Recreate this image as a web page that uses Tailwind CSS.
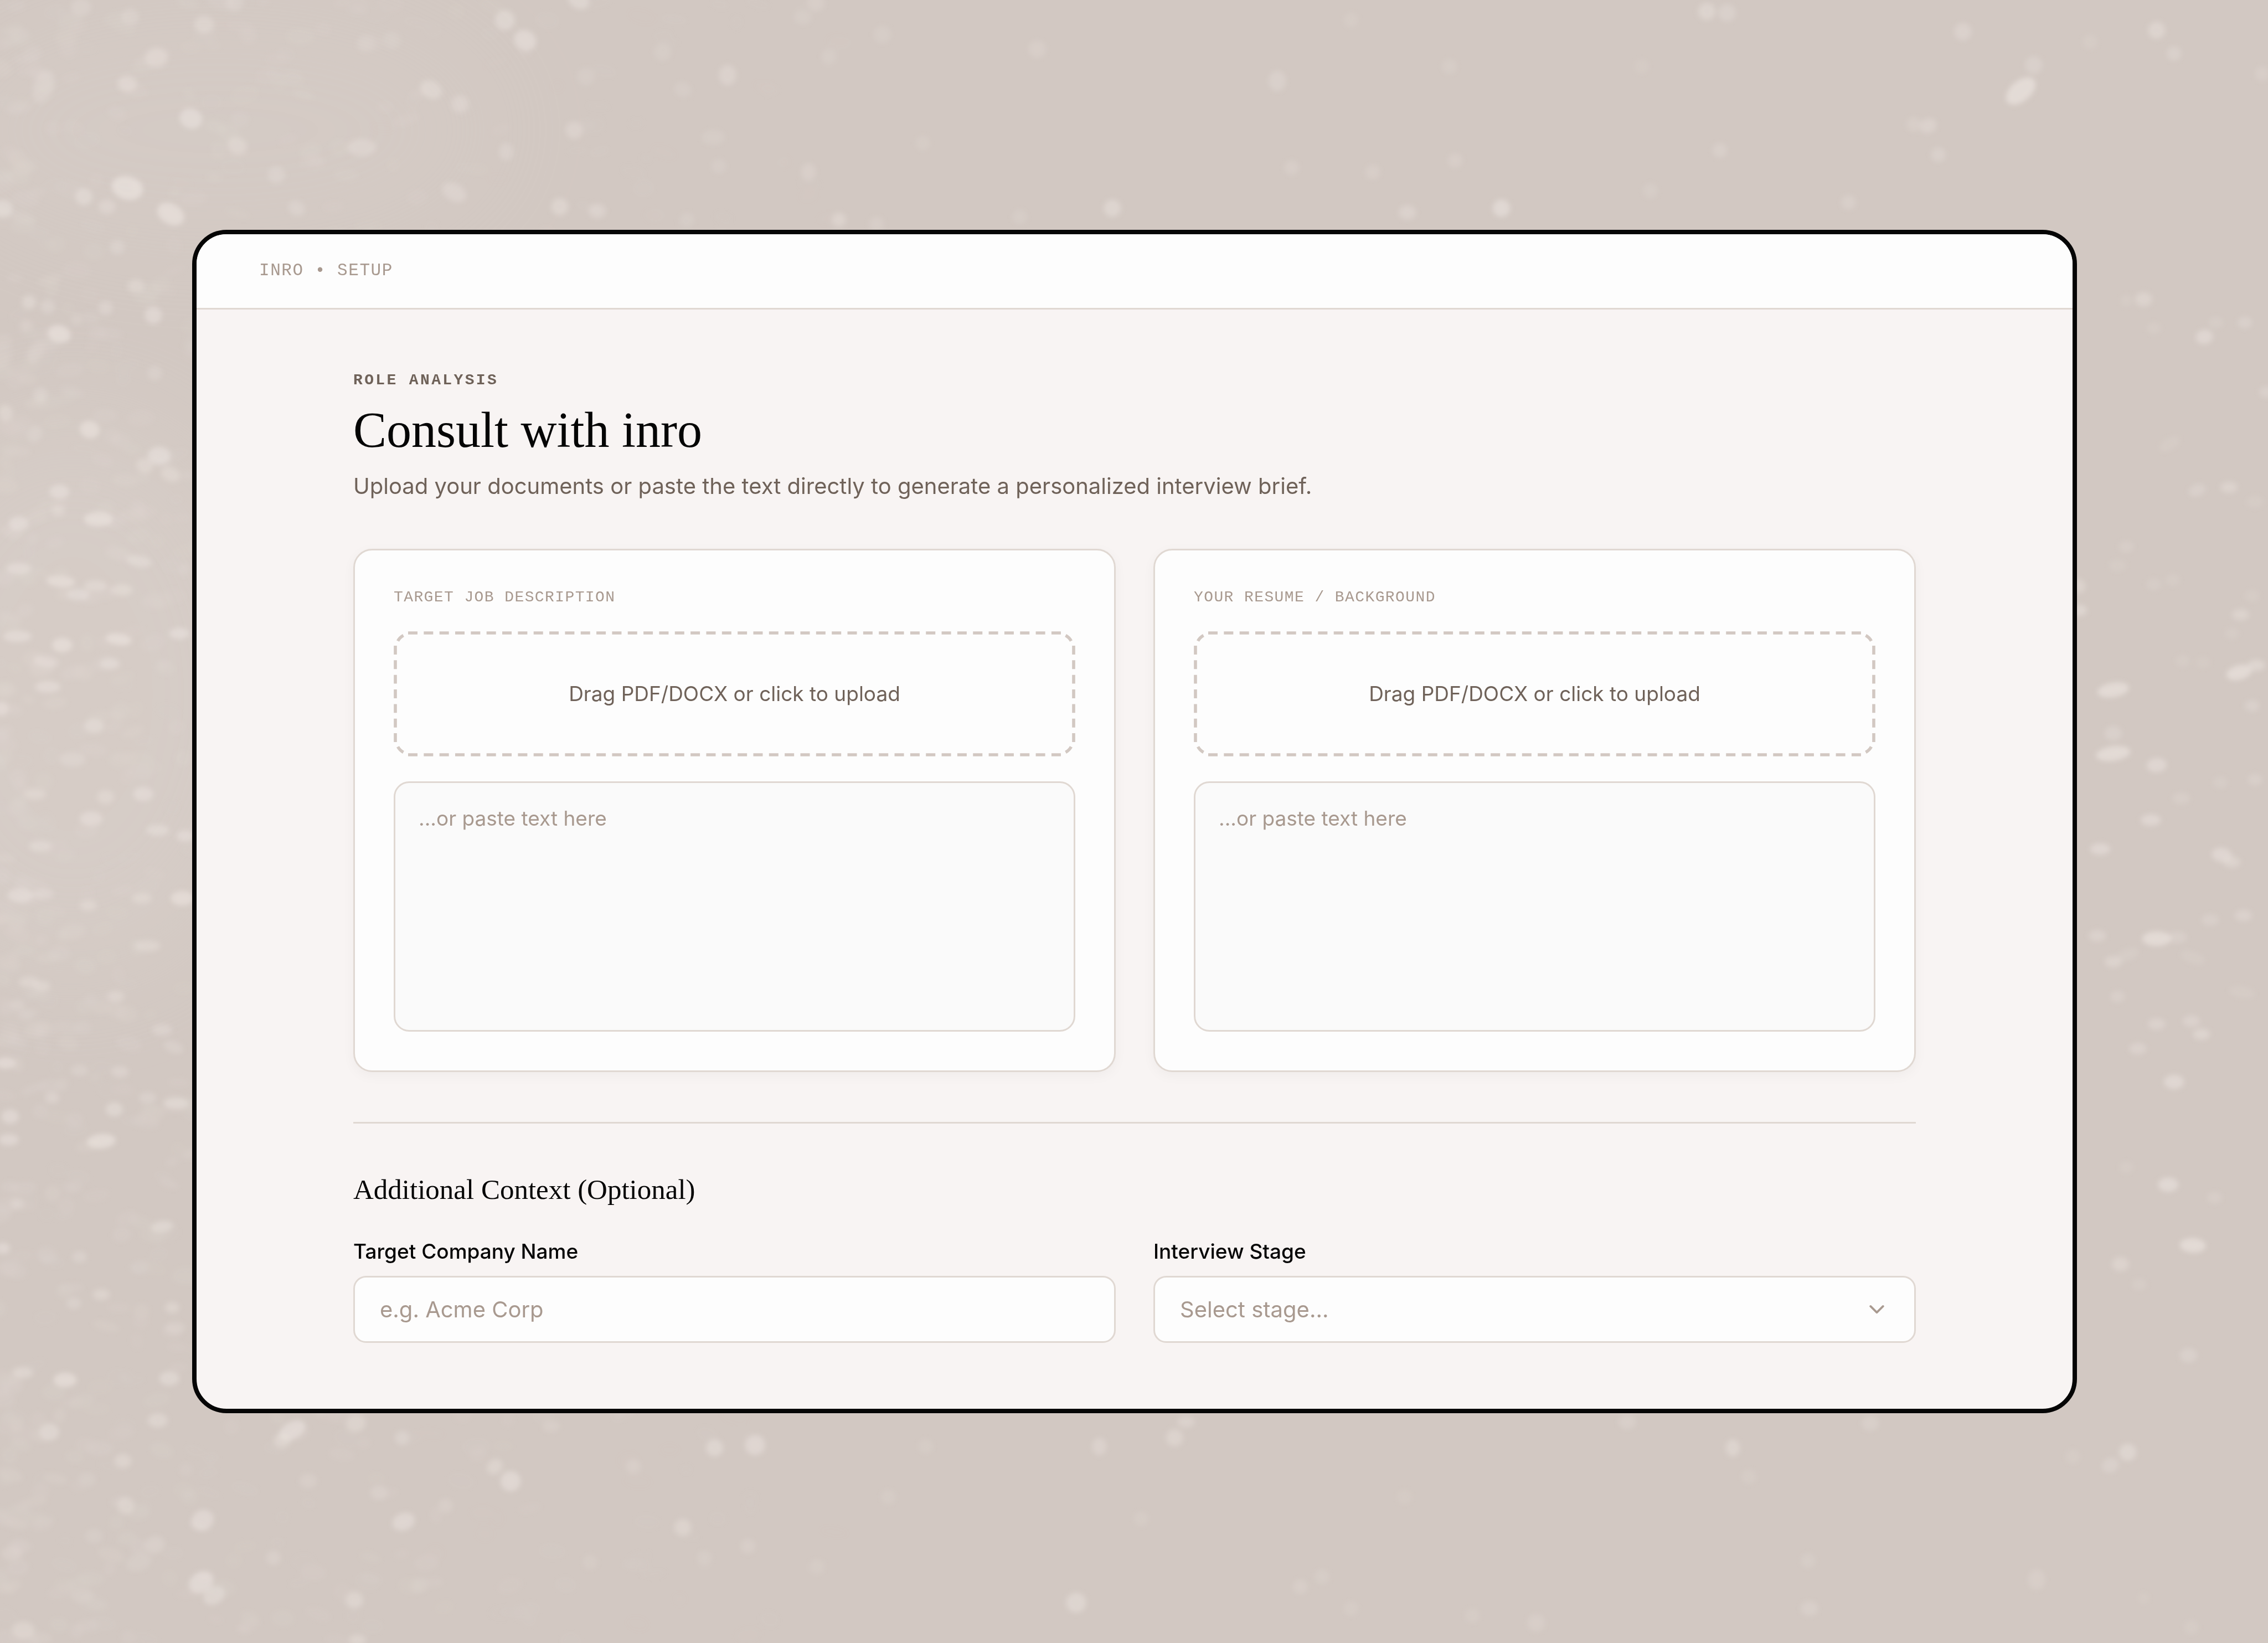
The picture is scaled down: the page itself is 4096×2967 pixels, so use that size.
<!DOCTYPE html>
<html lang="en">
<head>
    <meta charset="UTF-8">
    <meta name="viewport" content="width=device-width, initial-scale=1.0">
    <title>Inro - Setup</title>
    <script src="https://cdn.jsdelivr.net/npm/@tailwindcss/browser@4"></script>
</head>
<body class="bg-[#d2c8c2] font-['Inter','Liberation_Sans',sans-serif] text-[#050505]">
    <div class="relative min-h-screen flex items-center overflow-hidden pl-[347px] pr-[345px] py-[100px]">
        <!-- Dust texture behind the window -->
        <svg class="absolute inset-0 w-full h-full" viewBox="0 0 1568 1136" preserveAspectRatio="xMidYMid slice" aria-hidden="true">
            <defs>
                <filter id="soft" x="-5%" y="-5%" width="110%" height="110%"><feGaussianBlur stdDeviation="1.8" /></filter>
                <filter id="haze" x="-30%" y="-30%" width="160%" height="160%"><feGaussianBlur stdDeviation="40" /></filter>
            </defs>
            <ellipse cx="50" cy="480" rx="150" ry="200" fill="#e2dad5" opacity="0.25" filter="url(#haze)" />
            <ellipse cx="150" cy="90" rx="200" ry="90" fill="#e2dad5" opacity="0.15" filter="url(#haze)" />
            <g id="dust" fill="#ece5e0" filter="url(#soft)"></g>
        </svg>

        <main class="relative w-full border-8 border-[#050505] rounded-[62px] bg-[#f8f4f3] overflow-hidden">
            <header class="h-[136px] flex items-center px-[113px] bg-[#fdfdfd] border-b-3 border-[#e0d8d2]">
                <span class="font-['Liberation_Mono',monospace] text-[31px] tracking-wider text-[#a8998f]">INRO • SETUP</span>
            </header>

            <div class="px-[283px] pt-[113px] pb-[119px]">
                <p class="font-['Liberation_Mono',monospace] text-[28px] leading-[30px] font-bold tracking-[0.12em] text-[#6f6259]">ROLE ANALYSIS</p>
                <h1 class="mt-[21px] font-['Liberation_Serif',serif] text-[90px] leading-[108px]">Consult with inro</h1>
                <p class="mt-[17px] text-[40px] leading-[60px] text-[#6f6259]">Upload your documents or paste the text directly to generate a personalized interview brief.</p>

                <form id="setupForm">
                    <div class="mt-[83px] grid grid-cols-2 gap-[68px]">
                        <section class="border-3 border-[#e0d8d2] rounded-[34px] bg-[#fdfdfd] p-[70px] shadow-[0_6px_23px_rgba(0,0,0,0.04)]">
                            <label for="jobText" class="block font-['Liberation_Mono',monospace] text-[28px] leading-[30px] tracking-wider text-[#a8998f]">TARGET JOB DESCRIPTION</label>
                            <button type="button" class="relative mt-[46px] block w-full h-[226px] text-[37px] text-[#6f6259]">
                                <svg class="absolute inset-0 w-full h-full" viewBox="0 0 1231 226" preserveAspectRatio="none" fill="none" stroke="#d2c8c2" stroke-width="5.6" aria-hidden="true">
                                    <path d="M26 3H1205M26 223H1205" stroke-dasharray="17 11.34" />
                                    <path d="M3 26V200M1228 26V200" stroke-dasharray="15.9 10.45" />
                                    <path d="M7.5 17.5Q11 11 17.5 7.5M1213.5 7.5Q1220 11 1223.5 17.5M1223.5 208.5Q1220 215 1213.5 218.5M17.5 218.5Q11 215 7.5 208.5" />
                                </svg>
                                Drag PDF/DOCX or click to upload
                            </button>
                            <textarea id="jobText" placeholder="...or paste text here" class="mt-[45px] block w-full h-[452px] resize-none border-3 border-[#e0d8d2] rounded-[28px] bg-[#fafafa] px-[42px] py-[36px] text-[37px] leading-[56px] placeholder:text-[#a8998f] focus:outline-none focus:border-[#a8998f]"></textarea>
                        </section>

                        <section class="border-3 border-[#e0d8d2] rounded-[34px] bg-[#fdfdfd] p-[70px] shadow-[0_6px_23px_rgba(0,0,0,0.04)]">
                            <label for="resumeText" class="block font-['Liberation_Mono',monospace] text-[28px] leading-[30px] tracking-wider text-[#a8998f]">YOUR RESUME / BACKGROUND</label>
                            <button type="button" class="relative mt-[46px] block w-full h-[226px] text-[37px] text-[#6f6259]">
                                <svg class="absolute inset-0 w-full h-full" viewBox="0 0 1231 226" preserveAspectRatio="none" fill="none" stroke="#d2c8c2" stroke-width="5.6" aria-hidden="true">
                                    <path d="M26 3H1205M26 223H1205" stroke-dasharray="17 11.34" />
                                    <path d="M3 26V200M1228 26V200" stroke-dasharray="15.9 10.45" />
                                    <path d="M7.5 17.5Q11 11 17.5 7.5M1213.5 7.5Q1220 11 1223.5 17.5M1223.5 208.5Q1220 215 1213.5 218.5M17.5 218.5Q11 215 7.5 208.5" />
                                </svg>
                                Drag PDF/DOCX or click to upload
                            </button>
                            <textarea id="resumeText" placeholder="...or paste text here" class="mt-[45px] block w-full h-[452px] resize-none border-3 border-[#e0d8d2] rounded-[28px] bg-[#fafafa] px-[42px] py-[36px] text-[37px] leading-[56px] placeholder:text-[#a8998f] focus:outline-none focus:border-[#a8998f]"></textarea>
                        </section>
                    </div>

                    <hr class="mt-[90px] border-t-3 border-[#e0d8d2]">

                    <h2 class="mt-[89px] font-['Liberation_Serif',serif] text-[51px] leading-[61px]">Additional Context (Optional)</h2>
                    <div class="mt-[53px] grid grid-cols-2 gap-[68px]">
                        <div>
                            <label for="company" class="block text-[37px] leading-[56px] font-medium">Target Company Name</label>
                            <input type="text" id="company" name="company" placeholder="e.g. Acme Corp"
                                class="mt-[16px] block w-full h-[121px] border-3 border-[#e0d8d2] rounded-[23px] bg-[#fdfdfd] px-[45px] text-[40px] placeholder:text-[#a8998f] focus:outline-none focus:border-[#a8998f]">
                        </div>
                        <div>
                            <label for="stage" class="block text-[37px] leading-[56px] font-medium">Interview Stage</label>
                            <div class="relative mt-[16px]">
                                <select id="stage" name="stage"
                                    class="block w-full h-[121px] appearance-none border-3 border-[#e0d8d2] rounded-[23px] bg-[#fdfdfd] px-[45px] text-[40px] text-[#a8998f] focus:outline-none focus:border-[#a8998f]">
                                    <option value="">Select stage...</option>
                                    <option>Phone Screen</option>
                                    <option>Technical</option>
                                    <option>Final Round</option>
                                </select>
                                <svg class="absolute right-[48px] top-[38px] size-[45px] pointer-events-none" viewBox="0 0 24 24" fill="none" stroke="#a8998f" stroke-width="2" stroke-linecap="round" stroke-linejoin="round" aria-hidden="true"><path d="m6 9 6 6 6-6" /></svg>
                            </div>
                        </div>
                    </div>
                </form>
            </div>
        </main>
    </div>

    <script>
        // x, y, rx, ry, angle, opacity
        const specks = [
            [88,130,11,8,15,.9],[118,148,10,7,30,.85],[132,82,8,7,20,.75],[58,136,6,6,0,.6],[74,143,6,5,0,.45],[2,144,7,6,0,.6],
            [108,40,8,7,0,.5],[88,58,7,6,0,.5],[141,17,7,6,0,.5],[164,101,7,6,20,.5],[191,121,6,6,20,.4],[349,14,7,7,40,.6],
            [363,28,8,7,30,.7],[400,0,8,6,30,.6],[298,62,8,6,30,.55],[318,72,6,6,20,.45],[250,102,10,6,0,.45],[503,52,6,7,0,.45],
            [397,90,6,6,0,.45],[350,105,5,6,0,.4],[314,133,9,6,30,.45],[387,143,6,6,30,.55],[413,146,6,5,0,.45],[205,144,6,5,30,.4],
            [30,60,7,12,20,.35],[56,5,7,6,0,.35],[90,12,6,6,0,.35],[162,2,6,6,0,.35],[253,30,6,6,0,.25],[271,28,6,6,0,.25],
            [458,36,6,6,0,.25],[405,53,6,6,0,.22],[472,62,6,5,20,.22],[493,95,8,5,0,.25],[559,119,5,6,0,.35],[497,115,5,5,0,.22],
            [564,2,6,6,0,.3],[555,12,6,5,0,.25],[610,24,6,6,0,.25],[573,39,5,5,0,.25],[638,99,5,5,0,.2],[580,152,5,5,0,.5],
            [606,155,5,5,0,.3],[475,152,5,5,0,.25],[717,34,6,6,0,.3],[883,56,6,7,0,.4],[769,144,6,6,0,.6],[705,150,5,5,0,.25],
            [893,116,5,5,0,.3],[949,119,5,5,0,.3],[973,147,6,5,0,.45],[1038,144,6,6,0,.75],[1006,111,5,5,0,.3],[1180,8,6,6,0,.55],
            [1194,9,6,6,0,.4],[1135,46,5,5,0,.15],[1141,132,5,5,0,.25],[1189,104,5,5,0,.35],[934,14,5,5,0,.2],[1002,46,5,5,0,.25],
            [1278,140,5,5,0,.35],[1357,22,6,6,-40,.45],[1397,63,12,7,-40,.9],[1406,45,6,6,0,.4],[1491,21,6,6,0,.55],[1503,37,5,5,0,.4],
            [1333,87,6,5,-20,.45],[1340,107,5,5,0,.4],[1564,51,5,5,0,.3],[1445,29,5,5,0,.2],[1323,86,5,5,0,.3],
            [41,231,8,6,15,.85],[20,209,5,5,0,.55],[33,212,5,5,0,.4],[73,213,5,5,0,.45],[106,218,6,6,0,.65],[94,198,6,5,0,.5],
            [18,225,4,4,0,.3],[25,243,5,9,30,.3],[81,171,5,5,0,.4],[53,221,4,4,0,.3],[28,273,5,5,0,.4],[62,297,7,6,15,.8],
            [4,286,5,6,0,.5],[110,315,8,6,0,.75],[100,322,6,5,20,.5],[118,328,7,5,20,.5],[41,340,7,5,0,.7],[68,359,10,5,0,.85],
            [13,362,7,5,0,.7],[40,353,5,4,0,.5],[107,258,5,5,0,.35],[24,300,5,6,30,.35],
            [13,393,9,4,0,.65],[42,402,10,4,5,.8],[54,411,8,4,0,.6],[96,388,9,4,10,.6],[66,405,8,4,0,.55],[84,408,8,4,0,.5],
            [12,440,10,4,0,.7],[43,446,7,5,0,.8],[82,442,9,4,8,.85],[124,438,7,4,0,.75],[33,475,9,4,0,.65],[76,459,7,4,0,.6],
            [32,457,9,4,10,.45],[1,490,5,5,0,.65],[65,502,7,5,0,.6],[50,525,9,5,0,.4],[24,549,8,4,0,.5],[73,551,6,5,0,.5],
            [99,549,7,5,0,.65],[63,566,8,5,0,.65],[28,585,8,4,0,.55],[109,574,8,4,0,.6],[128,578,6,4,0,.65],[14,619,9,5,0,.65],
            [30,618,7,4,0,.45],[61,626,6,4,0,.5],[126,621,8,5,0,.8],[98,621,7,4,0,.5],[102,654,9,4,0,.5],[20,679,7,4,0,.5],
            [29,682,6,4,0,.5],[80,689,6,4,0,.5],[12,695,5,4,0,.35],[112,712,7,4,0,.45],[120,724,7,4,20,.35],[4,735,7,4,0,.7],
            [83,741,6,4,0,.45],[55,740,6,4,0,.35],[36,759,5,4,0,.45],[79,767,6,5,0,.6],[122,763,9,4,0,.6],[7,772,6,5,0,.65],
            [6,788,7,4,0,.65],[70,789,10,5,-5,.85],[102,759,6,4,0,.4],[12,832,5,4,0,.35],[112,848,8,4,-8,.6],[2,863,5,4,0,.65],
            [55,869,5,4,0,.4],[70,895,6,4,0,.5],[51,901,5,4,0,.4],[119,904,5,4,0,.5],[121,918,7,4,0,.35],[16,949,7,4,0,.55],
            [45,954,8,5,0,.8],[117,953,7,5,0,.6],[34,990,7,6,0,.6],[109,982,7,5,0,.55],[85,1010,6,5,0,.5],[87,1041,6,6,0,.5],
            [60,1023,6,5,0,.25],[65,1062,6,5,0,.25],[107,1068,7,6,-20,.35],[8,1074,7,5,0,.3],[96,1080,9,6,-20,.25],[57,1103,8,5,0,.25],
            [16,1127,8,6,0,.5],[139,1094,9,7,-30,.75],[148,1103,8,6,-30,.6],[140,1051,8,7,-30,.65],[202,989,10,6,-30,.75],[195,996,6,5,0,.5],
            [246,984,7,6,-20,.5],[353,1024,7,7,-30,.7],[342,1014,6,5,-40,.5],[279,1052,8,6,-20,.65],[262,1032,6,5,0,.35],[245,1106,6,6,0,.5],
            [247,1134,6,4,0,.5],[189,1077,5,5,0,.35],[213,1024,6,5,0,.3],[278,994,5,5,0,.4],[290,1096,6,5,-20,.25],[308,1041,5,5,0,.3],
            [494,1001,6,6,0,.6],[522,999,7,7,-30,.65],[472,1056,6,6,-20,.5],[517,1069,5,5,0,.3],[438,1014,5,5,0,.3],[487,1077,5,5,0,.25],
            [381,986,6,4,0,.3],[408,1080,5,5,0,.2],[565,1083,5,5,0,.2],[614,1035,5,5,0,.2],[640,1000,5,5,0,.2],[744,1108,7,7,0,.6],
            [760,1000,5,6,0,.45],[812,994,6,6,0,.5],[820,983,6,4,0,.45],[789,1050,5,5,0,.2],[899,1097,5,5,0,.3],[914,1090,5,5,0,.25],
            [934,1112,5,5,0,.2],[971,1035,5,5,0,.15],[1018,1117,5,5,0,.2],[1062,1122,6,6,0,.3],[1125,983,6,5,0,.35],[1198,1001,5,6,0,.55],
            [1209,1021,5,5,0,.2],[1250,1079,5,5,0,.25],[1251,1112,6,5,0,.35],[1293,984,6,5,0,.35],[1408,1092,6,7,0,.3],[1433,1007,5,5,0,.2],
            [1459,1013,6,5,-20,.4],[1471,1004,6,6,-20,.6],[1515,1125,5,5,0,.2],[1482,1105,4,4,0,.15],
            [1482,207,6,5,0,.5],[1470,208,4,4,0,.2],[1489,227,5,4,0,.2],[1524,233,6,5,-10,.65],[1532,223,5,4,0,.25],[1552,223,5,4,0,.4],
            [1567,271,5,4,0,.4],[1500,307,8,4,-30,.2],[1519,339,6,4,-20,.4],[1541,337,6,4,0,.5],[1559,347,6,4,0,.2],[1436,405,6,5,20,.5],
            [1437,422,6,4,0,.6],[1470,378,5,4,0,.3],[1464,391,6,4,0,.2],[1489,404,5,4,0,.25],[1502,401,5,4,0,.2],[1549,425,6,4,0,.5],
            [1543,438,5,4,0,.2],[1557,412,5,4,0,.2],[1548,465,9,5,-15,.85],[1560,460,6,4,0,.6],[1557,488,5,4,0,.4],[1461,477,11,5,-10,.85],
            [1461,507,6,5,0,.4],[1461,521,12,5,-8,.85],[1491,529,7,5,-5,.65],[1509,457,5,4,0,.2],[1523,458,5,4,0,.15],[1487,567,7,4,0,.65],
            [1452,587,7,4,0,.65],[1559,539,5,4,0,.35],[1535,541,5,4,0,.25],[1508,552,6,4,0,.3],[1536,591,7,5,8,.65],[1543,596,6,4,0,.5],
            [1528,636,6,4,0,.35],[1551,633,6,4,0,.45],[1491,649,10,5,0,.85],[1505,648,7,4,0,.35],[1450,647,6,4,0,.45],[1461,665,6,4,0,.5],
            [1471,660,8,4,-20,.25],[1464,689,5,4,0,.35],[1491,708,6,4,0,.45],[1515,706,6,4,0,.45],[1522,715,6,4,0,.55],[1478,725,6,4,0,.45],
            [1503,748,7,5,0,.7],[1470,807,5,4,0,.2],[1499,819,7,5,0,.75],[1531,828,5,4,0,.3],[1516,861,9,5,3,.85],[1466,874,6,5,0,.5],
            [1479,888,5,4,0,.25],[1513,937,6,5,0,.4],[1516,662,9,4,20,.2],[1550,686,9,4,10,.2]
        ];

        // Faint grains, thick at the left edge and thinning out to the right
        let seed = 7;
        const rand = () => (seed = (seed * 16807) % 2147483647) / 2147483647;
        for (let i = 0; i < 1300; i++) {
            const x = Math.pow(rand(), 1.6) * 620;
            specks.push([x, rand() * 1136, 4 + rand() * 6, 3 + rand() * 3, rand() * 40 - 20, (0.04 + rand() * 0.14) * (1 - x / 700)]);
        }

        document.getElementById('dust').innerHTML = specks.map(([x, y, rx, ry, a, o]) =>
            `<ellipse cx="${x}" cy="${y}" rx="${rx}" ry="${ry}" opacity="${o * 0.75}" transform="rotate(${a} ${x} ${y})" />`
        ).join('');
    </script>
</body>
</html>
